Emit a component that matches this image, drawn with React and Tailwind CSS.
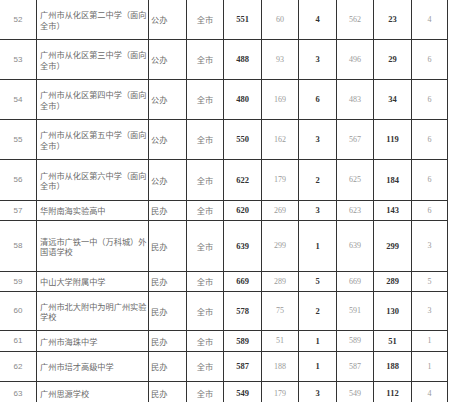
const rows = [
  { no: 52, name: ["广州市从化区第二中学（面向", "全市）"], type: "公办", area: "全市", a: 551, b: 60, c: 4, d: 562, e: 23, f: 4, h: "h-[40px]" },
  { no: 53, name: ["广州市从化区第三中学（面向", "全市）"], type: "公办", area: "全市", a: 488, b: 93, c: 3, d: 496, e: 29, f: 6, h: "h-[40px]" },
  { no: 54, name: ["广州市从化区第四中学（面向", "全市）"], type: "公办", area: "全市", a: 480, b: 169, c: 6, d: 483, e: 34, f: 6, h: "h-[40px]" },
  { no: 55, name: ["广州市从化区第五中学（面向", "全市）"], type: "公办", area: "全市", a: 550, b: 162, c: 3, d: 567, e: 119, f: 6, h: "h-[40px]" },
  { no: 56, name: ["广州市从化区第六中学（面向", "全市）"], type: "公办", area: "全市", a: 622, b: 179, c: 2, d: 625, e: 184, f: 6, h: "h-[41px]" },
  { no: 57, name: ["华附南海实验高中"], type: "民办", area: "全市", a: 620, b: 269, c: 3, d: 623, e: 143, f: 6, h: "h-[20px]" },
  { no: 58, name: ["清远市广铁一中（万科城）外", "国语学校"], type: "民办", area: "全市", a: 639, b: 299, c: 1, d: 639, e: 299, f: 3, h: "h-[51px]" },
  { no: 59, name: ["中山大学附属中学"], type: "民办", area: "全市", a: 669, b: 289, c: 5, d: 669, e: 289, f: 5, h: "h-[20px]" },
  { no: 60, name: ["广州市北大附中为明广州实验", "学校"], type: "民办", area: "全市", a: 578, b: 75, c: 2, d: 591, e: 130, f: 3, h: "h-[39px]" },
  { no: 61, name: ["广州市海珠中学"], type: "民办", area: "全市", a: 589, b: 51, c: 1, d: 589, e: 51, f: 1, h: "h-[21px]" },
  { no: 62, name: ["广州市培才高级中学"], type: "民办", area: "全市", a: 587, b: 188, c: 1, d: 587, e: 188, f: 1, h: "h-[30px]" },
  { no: 63, name: ["广州思源学校"], type: "民办", area: "全市", a: 549, b: 179, c: 3, d: 549, e: 112, f: 4, h: "h-[24px]" },
];

const cjk = "font-['Noto_Sans_CJK_SC',sans-serif]";
const serif = "font-['Liberation_Serif','Noto_Sans_CJK_SC',serif]";
const cell = "flex items-center border-b border-[#333]";
const line = "border-l border-[#333]";

function Row({ r }) {
  return (
    <div className={`grid grid-cols-[36px_112px_38px_37px_38px_37px_38px_37px_38px_37px] ${r.h}`}>
      <div className={`${cell} justify-center text-[8px] text-[#8a8a8a] font-['Liberation_Sans',sans-serif]`}>
        {r.no}
      </div>
      <div className={`${cell} ${line} pl-[3px] ${cjk} text-[8.2px] leading-[10.5px] text-[#6a6a6a]`}>
        <div>
          {r.name.map((t, i) => (
            <div key={i} className="whitespace-nowrap">{t}</div>
          ))}
        </div>
      </div>
      <div className={`${cell} ${line} pl-[2px] ${cjk} text-[8.2px] text-[#6a6a6a]`}>{r.type}</div>
      <div className={`${cell} ${line} justify-center ${cjk} text-[8.2px] text-[#7a7a7a]`}>{r.area}</div>
      <div className={`${cell} ${line} justify-center ${serif} font-bold text-[8.5px] text-[#333]`}>{r.a}</div>
      <div className={`${cell} ${line} justify-center ${serif} text-[8px] text-[#9a9a9a]`}>{r.b}</div>
      <div className={`${cell} ${line} justify-center ${serif} font-bold text-[8.5px] text-[#333]`}>{r.c}</div>
      <div className={`${cell} ${line} justify-center ${serif} text-[8px] text-[#9a9a9a]`}>{r.d}</div>
      <div className={`${cell} ${line} justify-center ${serif} font-bold text-[8.5px] text-[#333]`}>{r.e}</div>
      <div className={`${cell} ${line} border-r justify-center ${serif} text-[8px] text-[#9a9a9a]`}>{r.f}</div>
    </div>
  );
}

export default function App() {
  return (
    <div className="w-[450px] h-[402px] overflow-hidden bg-white">
      {rows.map((r) => (
        <Row key={r.no} r={r} />
      ))}
    </div>
  );
}
